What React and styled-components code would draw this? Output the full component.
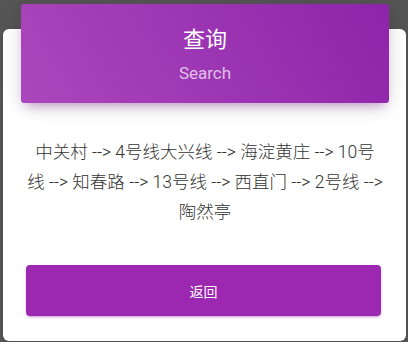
import React from 'react';
import styled, { createGlobalStyle } from 'styled-components';

const GlobalStyle = createGlobalStyle`
    html, body {
        margin: 0;
        padding: 0;
        background: #555555;
        font-family: Roboto, "Noto Sans CJK SC", sans-serif;
    }
`

const Page = styled.div`
    width: 408px;
    height: 342px;
    box-sizing: border-box;
    padding: 29px 2px 1px 3px;
    overflow: hidden;
`

const Card = styled.div`
    height: 100%;
    background: #fff;
    border-radius: 6px;
    display: flex;
    flex-direction: column;
    box-shadow: 0 1px 4px 0 rgba(0, 0, 0, 0.14);
`

const Header = styled.div`
    margin: -25px 17px 0 18px;
    padding: 20px 0 15px;
    border-radius: 3px;
    background: linear-gradient(60deg, #ab47bc, #8e24aa);
    box-shadow: 0 4px 20px 0 rgba(0, 0, 0, 0.14), 0 7px 10px -5px rgba(156, 39, 176, 0.4);
    text-align: center;
    color: #fff;
`

const Title = styled.h4`
    margin: 0;
    font-size: 22px;
    line-height: 31px;
    font-weight: 400;
`

const Subtitle = styled.p`
    margin: 4px 0 0;
    font-size: 17px;
    line-height: 29px;
    font-weight: 400;
    color: rgba(255, 255, 255, 0.7);
`

const Body = styled.div`
    padding: 34px 23px 0 24px;
    text-align: center;
    font-size: 17.5px;
    line-height: 30px;
    font-weight: 300;
    color: #333;
`

const Footer = styled.div`
    padding: 38px 25px 0 23px;
`

const Button = styled.button`
    width: 100%;
    height: 51px;
    border: none;
    border-radius: 4px;
    background: #9c27b0;
    color: #fff;
    font-family: Roboto, "Noto Sans CJK SC", sans-serif;
    font-size: 14px;
    font-weight: 400;
    box-shadow: 0 2px 2px 0 rgba(156, 39, 176, 0.14), 0 3px 1px -2px rgba(156, 39, 176, 0.2), 0 1px 5px 0 rgba(156, 39, 176, 0.12);
    cursor: pointer;
`

export default function App() {
    return (
        <>
            <GlobalStyle />
            <Page>
                <Card>
                    <Header>
                        <Title>查询</Title>
                        <Subtitle>Search</Subtitle>
                    </Header>
                    <Body>
                        中关村 --&gt; 4号线大兴线 --&gt; 海淀黄庄 --&gt; 10号线 --&gt; 知春路 --&gt; 13号线 --&gt; 西直门 --&gt; 2号线 --&gt; 陶然亭
                    </Body>
                    <Footer>
                        <Button>返回</Button>
                    </Footer>
                </Card>
            </Page>
        </>
    )
}
